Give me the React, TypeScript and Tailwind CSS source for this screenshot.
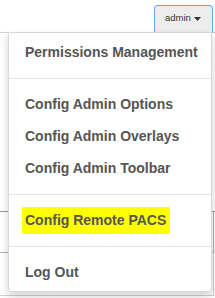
import React from 'react';

const font = { fontFamily: '"Liberation Sans", Arial, sans-serif' };

const Item: React.FC<{ label: string; marked?: boolean }> = ({ label, marked }) => (
  <div className="h-8 flex items-center pl-4 text-[14px] font-bold text-[#555] whitespace-nowrap">
    {marked ? (
      <span className="bg-[#ffff00] -ml-[3px] pl-[3px] pr-[4px] py-[3px] rounded-[2px]">{label}</span>
    ) : (
      label
    )}
  </div>
);

const Divider: React.FC = () => <div className="h-px bg-[#e5e5e5] mt-[10px] mb-[9px]" />;

export default function App() {
  return (
    <div className="w-[215px] h-[298px] bg-white overflow-hidden flex flex-col" style={font}>
      {/* top bar with the admin button */}
      <div className="h-[33px] flex justify-end items-end pr-[2px] border-b border-[#d4d4d4] relative z-10">
        <div className="relative">
          <button className="w-[59px] h-[28px] -mb-px border border-b-0 border-[#6fa8dc] rounded-t-[4px] bg-[#ededed] flex items-center pl-[10px] pb-[2px] text-[9.5px] text-[#333]">
            admin
            <svg className="ml-[3px] mt-[1px]" width="7" height="4" viewBox="0 0 7 4">
              <path d="M0 0h7L3.5 4z" fill="#333" />
            </svg>
          </button>

          {/* dropdown menu */}
          <div className="absolute right-[1px] top-[27px] w-[204px] bg-white border border-[#d9d9d9] rounded-b-[4px] shadow-[0_4px_8px_rgba(0,0,0,0.18)] pt-[3px] pb-[3px]">
            <Item label="Permissions Management" />
            <Divider />
            <Item label="Config Admin Options" />
            <Item label="Config Admin Overlays" />
            <Item label="Config Admin Toolbar" />
            <Divider />
            <Item label="Config Remote PACS" marked />
            <Divider />
            <Item label="Log Out" />
          </div>
        </div>
      </div>

      {/* page content behind the menu */}
      <div className="h-[179px] border-b border-[#9a9a9a]" />
      <div className="h-[41px] w-[214px] border-b border-r border-[#b0b0b0]" />
      <div className="h-[43px] w-[214px] border-b border-r border-[#cfcfcf]" />
    </div>
  );
}
